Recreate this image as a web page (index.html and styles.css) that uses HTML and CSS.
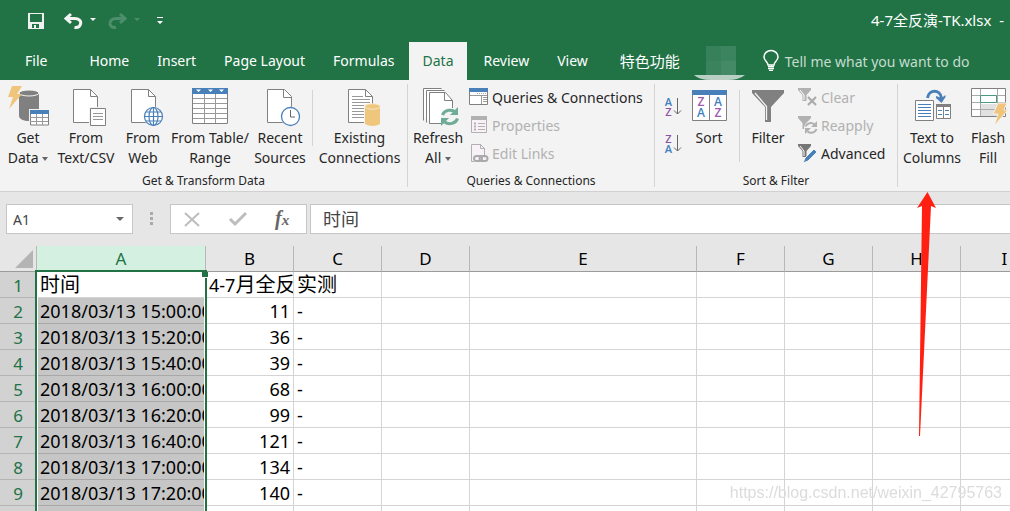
FILE: index.html
```html
<!DOCTYPE html>
<html lang="en">
<head>
    <meta charset="UTF-8">
    <meta name="viewport" content="width=device-width, initial-scale=1.0">
    <title>4-7全反演-TK.xlsx</title>
    <link rel="stylesheet" href="styles.css">
</head>
<body>
    <header class="titlebar">
        <div class="quick-access">
            <button type="button" class="quick-btn" aria-label="Save">
                <svg width="16" height="16" viewBox="0 0 16 16"><path fill="#f0f0f0" fill-rule="evenodd" d="M0 0H16V16H0ZM2 1V9H14V1ZM4 11V15H6V12H8V15H11V11Z"/></svg>
            </button>
            <button type="button" class="quick-btn undo" aria-label="Undo">
                <svg width="34" height="18" viewBox="0 0 34 18"><path d="M7 2L2 6.500L7 11M2.500 6.500H10.500C15 6.500 17.500 9 16.500 12C16 14.500 14 16 10.500 15.500" fill="none" stroke="#f4f4f4" stroke-width="3"/><path d="M26 6h6l-3 3z" fill="#f4f4f4"/></svg>
            </button>
            <button type="button" class="quick-btn redo" aria-label="Redo" disabled>
                <svg width="34" height="18" viewBox="0 0 34 18"><path d="M12 2L17 6.500L12 11M16.500 6.500H8.500C4 6.500 1.500 9 2 12C2.500 14.500 4.500 16 8 15.500" fill="none" stroke="#4d8f6c" stroke-width="3"/><path d="M26 6h6l-3 3z" fill="#4d8f6c"/></svg>
            </button>
            <button type="button" class="quick-btn" aria-label="Customize Quick Access Toolbar">
                <svg width="6" height="8" viewBox="0 0 6 8"><path d="M0 0h6v1H0zM0 4h6l-3 3z" fill="#fff"/></svg>
            </button>
        </div>
        <div class="file-name">4-7全反演-TK.xlsx&nbsp; -</div>
    </header>

    <nav class="tabs">
        <a href="#" class="tab file">File</a>
        <a href="#" class="tab">Home</a>
        <a href="#" class="tab">Insert</a>
        <a href="#" class="tab">Page Layout</a>
        <a href="#" class="tab">Formulas</a>
        <a href="#" class="tab active">Data</a>
        <a href="#" class="tab">Review</a>
        <a href="#" class="tab">View</a>
        <a href="#" class="tab extra">特色功能</a>
        <svg class="blurred" width="56" height="38" viewBox="0 0 56 38"><path d="M12 4h15v15H12z" fill="#36805a"/><path d="M27 4h15v15H27z" fill="#3c845f"/><path d="M12 19h15v14H12z" fill="#3a835d"/><path d="M27 19h15v14H27z" fill="#448a66"/><path d="M0 33h51q-6 5-17 5H17Q5 38 0 33z" fill="#b9cfc3"/></svg>
        <a href="#" class="tell-me">
            <svg width="16" height="22" viewBox="0 0 16 22"><path d="M5 15C5 12 1 11 1 7A7 6.500 0 0 1 15 7C15 11 11 12 11 15Z" fill="none" stroke="#fff" stroke-width="1.500"/><path d="M5 16.500h6M5 18.500h6M6 20.300h4" stroke="#fff" stroke-width="1.300"/></svg>
            Tell me what you want to do
        </a>
    </nav>

    <main class="ribbon">
        <section class="group group-get">
            <div class="tools">
                <button type="button" class="big w50">
                    <svg width="40" height="40" viewBox="0 0 40 40"><path d="M11 8v22c0 3 5 5 10 5s10-2 10-5V8z" fill="#808080"/><ellipse cx="21" cy="7" rx="10" ry="3" fill="#808080" stroke="#f3f3f3"/><path d="M4 0h10L9 8h5L1 23 5 11H0z" fill="#f0c57b"/><path d="M21 23h20v17H21z" fill="#f3f3f3"/><path d="M22.500 25h18v14h-18z" fill="#fff" stroke="#808080"/><path d="M22 24h19v4H22z" fill="#4a80b9"/><path d="M22 31.500h18M22 35.500h18M28.500 28v11M34.500 28v11" stroke="#999"/></svg>
                    <span>Get<br>Data <i class="caret"></i></span>
                </button>
                <button type="button" class="big w66">
                    <svg width="40" height="40" viewBox="0 0 40 40"><path d="M7.500 3.500h17l7 7v26h-24z" fill="#fff" stroke="#808080"/><path d="M24.500 3.500v7h7" fill="none" stroke="#808080"/><path d="M23 21h18v19H23z" fill="#f3f3f3"/><path d="M24.500 22.500h15v17h-15z" fill="#fff" stroke="#808080"/><path d="M27 27.500h10M27 30.500h10M27 33.500h10" stroke="#999"/></svg>
                    <span>From<br>Text/CSV</span>
                </button>
                <button type="button" class="big w48">
                    <svg width="40" height="40" viewBox="0 0 40 40"><path d="M8.500 3.500h17l7 7v26h-24z" fill="#fff" stroke="#808080"/><path d="M25.500 3.500v7h7" fill="none" stroke="#808080"/><circle cx="30.500" cy="30.500" r="10" fill="#f3f3f3"/><g fill="none" stroke="#4a80b9" stroke-width="1.200"><circle cx="30.500" cy="30.500" r="9" fill="#fff"/><ellipse cx="30.500" cy="30.500" rx="4.500" ry="9"/><path d="M30.500 21.500v18M21.500 30.500h18M23 26h15M23 35h15"/></g></svg>
                    <span>From<br>Web</span>
                </button>
                <button type="button" class="big w86">
                    <svg width="40" height="40" viewBox="0 0 40 40"><path d="M2.500 2.500h35v35h-35z" fill="#fff" stroke="#808080"/><path d="M3 12.500h34M3 17.500h34M3 22.500h34M3 27.500h34M3 32.500h34M14.500 8v29M25.500 8v29" stroke="#999"/><path d="M2 2h36v6H2z" fill="#4a80b9"/><path d="M6 3.500h5L8.500 6zM18 3.500h5L20.500 6zM29 3.500h5L31.500 6z" fill="#fff"/></svg>
                    <span>From Table/<br>Range</span>
                </button>
                <button type="button" class="big w54">
                    <svg width="40" height="40" viewBox="0 0 40 40"><path d="M7.500 3.500h17l7 7v26h-24z" fill="#fff" stroke="#808080"/><path d="M23.500 3.500v8h8" fill="none" stroke="#808080"/><circle cx="30.500" cy="30.500" r="10" fill="#f3f3f3"/><circle cx="30.500" cy="30.500" r="9" fill="#fff" stroke="#4a80b9" stroke-width="1.300"/><path d="M30.500 24v7H35" fill="none" stroke="#666"/></svg>
                    <span>Recent<br>Sources</span>
                </button>
                <div class="divider"></div>
                <button type="button" class="big w85">
                    <svg width="40" height="40" viewBox="0 0 40 40"><path d="M8.500 3.500h17l7 7v26h-24z" fill="#fff" stroke="#808080"/><path d="M25.500 3.500v7h7" fill="none" stroke="#808080"/><path d="M12 10.500h11M12 13.500h18M12 16.500h18M12 19.500h18M12 22.500h18M12 25.500h18M12 28.500h18M12 31.500h18" stroke="#999"/><path d="M24 18h17v22H24z" fill="#f3f3f3"/><path d="M25 21v17q7.500 4 15 0V21z" fill="#eec67c"/><ellipse cx="32.500" cy="20.500" rx="7.500" ry="2.700" fill="#eec67c" stroke="#f8e9cb"/></svg>
                    <span>Existing<br>Connections</span>
                </button>
            </div>
            <h2>Get &amp; Transform Data</h2>
        </section>

        <section class="group group-queries">
            <div class="tools">
                <button type="button" class="big w54">
                    <svg width="40" height="40" viewBox="0 0 40 40"><g fill="#fff" stroke="#808080"><path d="M5.500 34.500v-32h18M8.500 36.500v-32h18"/><path d="M11.500 6.500h16l7 8v23h-23z"/><path d="M26.500 6.500v8h8" fill="none"/></g><circle cx="32" cy="31" r="9.500" fill="#f3f3f3"/><path d="M24.500 29a8 7 0 0 1 13-3M39.500 32.500a8 7 0 0 1-13 3.500" fill="none" stroke="#6eac95" stroke-width="3"/><path d="M40 21v8h-8zM23 40v-8h8z" fill="#6eac95"/></svg>
                    <span>Refresh<br>All <i class="caret"></i></span>
                </button>
                <div class="list">
                    <button type="button" class="small">
                        <svg width="20" height="20" viewBox="0 0 20 20"><path d="M.5 1.500h18v16H.5z" fill="#fff" stroke="#808080"/><path d="M0 1h19v4H0z" fill="#4a80b9"/><path d="M1 8.500h17M12.500 9v8" stroke="#999"/><path d="M8 6.500h10" stroke="#aaa" stroke-dasharray="1 1"/><path d="M14 10.500h4M14 12.500h4M14 14.500h4" stroke="#999"/></svg>
                        Queries &amp; Connections
                    </button>
                    <button type="button" class="small" disabled>
                        <svg width="20" height="20" viewBox="0 0 20 20"><path d="M2.500 1.500h15v16h-15z" fill="#f8f2f8" stroke="#b1b1b1"/><path d="M2 1h16v4H2z" fill="#b1b1b1"/><path d="M9 8.500h7M9 11.500h7M9 14.500h7" stroke="#b1b1b1"/><path d="M5 7.500h2v2H5zM5 10.500h2v2H5zM5 13.500h2v2H5z" fill="#b1b1b1"/></svg>
                        Properties
                    </button>
                    <button type="button" class="small" disabled>
                        <svg width="20" height="20" viewBox="0 0 20 20"><path d="M2.500 18.500v-17h9l4 4v9" fill="#f8f2f8" stroke="#b1b1b1"/><path d="M11.500 1v4.500H16M2.500 18.500H5" fill="none" stroke="#b1b1b1"/><g fill="none" stroke="#aaa" stroke-width="2"><rect x="5" y="13" width="8" height="5" rx="2.500"/><rect x="10.500" y="13" width="8" height="5" rx="2.500"/></g></svg>
                        Edit Links
                    </button>
                </div>
            </div>
            <h2>Queries &amp; Connections</h2>
        </section>

        <section class="group group-sort">
            <div class="tools">
                <div class="sort-pair">
                    <button type="button" aria-label="Sort A to Z">
                        <svg width="20" height="22" viewBox="0 0 20 22"><g class="letters"><text x="4.500" y="10" fill="#3f7fbf">A</text><text x="4.500" y="20" fill="#8e52a5">Z</text></g><path d="M13.500 2v16M10 14.500l3.500 3.500 3.500-3.500" fill="none" stroke="#666"/></svg>
                    </button>
                    <button type="button" aria-label="Sort Z to A">
                        <svg width="20" height="22" viewBox="0 0 20 22"><g class="letters"><text x="4.500" y="10" fill="#8e52a5">Z</text><text x="4.500" y="20" fill="#3f7fbf">A</text></g><path d="M13.500 2v16M10 14.500l3.500 3.500 3.500-3.500" fill="none" stroke="#666"/></svg>
                    </button>
                </div>
                <button type="button" class="big w50">
                    <svg width="40" height="40" viewBox="0 0 40 40"><path d="M3.500 4.500h34v30h-34z" fill="#fff" stroke="#808080"/><path d="M20.500 9v25" stroke="#808080"/><path d="M3 4h35v5H3z" fill="#4a80b9"/><g class="letters big-letters"><text x="12" y="20" fill="#9b59b0">Z</text><text x="12" y="31" fill="#3f7fbf">A</text><text x="29" y="20" fill="#3f7fbf">A</text><text x="29" y="31" fill="#9b59b0">Z</text></g></svg>
                    <span>Sort</span>
                </button>
                <div class="divider long"></div>
                <button type="button" class="big w48">
                    <svg width="40" height="40" viewBox="0 0 40 40"><path d="M4 4h32v3L23 21v15h-6V21L4 7z" fill="#808080"/><path d="M7 7l11.500 13.500V34" fill="none" stroke="#f3f3f3" stroke-width="1.300"/></svg>
                    <span>Filter</span>
                </button>
                <div class="list filter-list">
                    <button type="button" class="small" disabled>
                        <svg width="20" height="20" viewBox="0 0 20 20"><path d="M0 1h13v2L8.500 8v6h-4V8L0 3z" fill="#b1b1b1"/><path d="M2 3l4 5v5" fill="none" stroke="#fff"/><path d="M10 10l8 8M18 10l-8 8" stroke="#aaa" stroke-width="2.200"/></svg>
                        Clear
                    </button>
                    <button type="button" class="small" disabled>
                        <svg width="20" height="20" viewBox="0 0 20 20"><path d="M0 1h13v2L8.500 8v6h-4V8L0 3z" fill="#b1b1b1"/><circle cx="13" cy="13" r="7" fill="#f3f3f3"/><path d="M7.500 11.500a5.500 5 0 0 1 9-2M18.500 14a5.500 5 0 0 1-9 2.500" fill="none" stroke="#b1b1b1" stroke-width="2"/><path d="M19 6v6h-6zM7 19v-6h6z" fill="#b1b1b1"/></svg>
                        Reapply
                    </button>
                    <button type="button" class="small">
                        <svg width="20" height="20" viewBox="0 0 20 20"><path d="M0 1h13v2L8.500 8v6h-4V8L0 3z" fill="#777"/><path d="M2 3l4 5v5" fill="none" stroke="#fff"/><path d="M16 6l3 3-9 9-5 2 2-5z" fill="#4a80b9" stroke="#f3f3f3"/></svg>
                        Advanced
                    </button>
                </div>
            </div>
            <h2>Sort &amp; Filter</h2>
        </section>

        <section class="group group-tools">
            <div class="tools">
                <button type="button" class="big w62">
                    <svg width="40" height="40" viewBox="0 0 40 40"><path d="M3.500 14.500h18v20h-18z" fill="#fff" stroke="#808080"/><path d="M6 18.500h13M6 21.500h13M6 24.500h13M6 27.500h13M6 30.500h13" stroke="#4a80b9"/><path d="M24.500 18.500h14v14h-14z" fill="#fff" stroke="#808080"/><path d="M24 18h15v3H24zM31 19h1v14h-1z" fill="#808080"/><path d="M26 24.500h4M26 28.500h4M33 24.500h4M33 28.500h4" stroke="#4a80b9"/><path d="M15.500 12C17 3 28 3 29.500 12" fill="none" stroke="#4a80b9" stroke-width="3"/><path d="M24 10l5.500 2 4-3v2l-4 6-5.500-5z" fill="#4a80b9"/></svg>
                    <span>Text to<br>Columns</span>
                </button>
                <button type="button" class="big w50">
                    <svg width="40" height="40" viewBox="0 0 40 40"><path d="M3.500 2.500h34v28h-34z" fill="#fff" stroke="#808080"/><path d="M12 18h18v12H12z" fill="#e1e1e1"/><path d="M4 9.500h33M4 16.500h33M4 23.500h33M12.500 3v27M29.500 3v27" stroke="#aaa"/><path d="M12.500 9.500h16v7h-16z" fill="#fff" stroke="#4d997c"/><path d="M30 17h9l-3 7h4L26 40l4-12h-5z" fill="#f0c57b" stroke="#f3f3f3"/></svg>
                    <span>Flash<br>Fill</span>
                </button>
            </div>
        </section>
    </main>

    <div class="formula-bar">
        <div class="name-box">
            <input type="text" value="A1" aria-label="Name Box">
            <i class="caret"></i>
        </div>
        <svg class="grip" width="4" height="14" viewBox="0 0 4 14"><path d="M0 0h3v3H0zM0 5h3v3H0zM0 10h3v3H0z" fill="#aaa"/></svg>
        <div class="formula-actions">
            <button type="button" aria-label="Cancel"><svg width="18" height="16" viewBox="0 0 18 16"><path d="M2 2l14 13M16 2L2 15" stroke="#bdbdbd" stroke-width="2"/></svg></button>
            <button type="button" aria-label="Enter"><svg width="18" height="16" viewBox="0 0 18 16"><path d="M1 8l5 5L17 2" fill="none" stroke="#bdbdbd" stroke-width="3"/></svg></button>
            <button type="button" class="fx" aria-label="Insert Function">f<small>x</small></button>
        </div>
        <input type="text" class="formula-input" value="时间" aria-label="Formula">
    </div>

    <div class="sheet">
        <table>
            <colgroup>
                <col class="c-head"><col class="c-a"><col><col><col><col class="c-e"><col><col><col><col>
            </colgroup>
            <thead>
                <tr>
                    <th><svg class="corner" width="18" height="18" viewBox="0 0 18 18"><path d="M18 0v18H0z" fill="#b4b4b4"/></svg></th>
                    <th class="selected">A</th><th>B</th><th>C</th><th>D</th><th>E</th><th>F</th><th>G</th><th>H</th><th>I</th>
                </tr>
            </thead>
            <tbody id="rows"></tbody>
        </table>
        <div class="selection"></div>
    </div>

    <svg class="arrow" width="20" height="246" viewBox="0 0 20 246"><path d="M10.500 0L0 16l5-2L2 244h1L14 14l5 2z" fill="#ff2012"/></svg>
    <div class="watermark">https://blog.csdn.net/weixin_42795763</div>

    <script>
        var data = [
            ["时间", "4-7月全反演", "实测"],
            ["2018/03/13 15:00:00", 11, "-"],
            ["2018/03/13 15:20:00", 36, "-"],
            ["2018/03/13 15:40:00", 39, "-"],
            ["2018/03/13 16:00:00", 68, "-"],
            ["2018/03/13 16:20:00", 99, "-"],
            ["2018/03/13 16:40:00", 121, "-"],
            ["2018/03/13 17:00:00", 134, "-"],
            ["2018/03/13 17:20:00", 140, "-"],
            ["", "", ""]
        ];

        // Build the sheet rows, columns D to I are empty
        var html = "";
        data.forEach(function (row, i) {
            html += "<tr><th>" + (i + 1) + "</th>";
            for (var c = 0; c < 9; c++) {
                var value = row[c] === undefined ? "" : row[c];
                if (typeof value === "number") {
                    html += '<td class="number">' + value + "</td>";
                } else {
                    // Chinese text is set a little larger than the digits
                    html += "<td>" + value.replace(/[\u4e00-\u9fff]+/g, '<span class="cjk">$&</span>') + "</td>";
                }
            }
            html += "</tr>";
        });
        document.getElementById("rows").innerHTML = html;
    </script>
</body>
</html>
```
FILE: styles.css
```css
* {
    box-sizing: border-box;
}

body {
    position: relative;
    margin: 0;
    height: 100vh;
    overflow: hidden;
    background-color: #fff;
    font-family: "Noto Sans", "Noto Sans CJK SC", sans-serif;
    font-size: 14px;
    color: #262626;
}

button {
    padding: 0;
    border: none;
    background: none;
    font: inherit;
    color: inherit;
    cursor: pointer;
}

button:disabled {
    color: #b1b1b1;
    cursor: default;
}

input {
    border: none;
    outline: none;
    background: none;
    font: inherit;
    color: #444;
}

svg {
    display: block;
    flex: none;
    overflow: visible;
}

.caret {
    display: inline-block;
    border: 3px solid transparent;
    border-top: 4px solid #666;
    border-bottom: 0;
    vertical-align: middle;
}

/* Title bar and tabs */
.titlebar {
    display: flex;
    align-items: center;
    justify-content: space-between;
    height: 42px;
    padding: 0 6px 2px 28px;
    background-color: #217346;
    color: #fff;
}

.quick-access {
    display: flex;
    align-items: center;
    padding-top: 2px;
}

.undo {
    margin-left: 20px;
}

.redo {
    margin: 0 15px 0 10px;
}

.file-name {
    font-size: 15px;
    line-height: 18px;
}

.tabs {
    display: flex;
    height: 38px;
    background-color: #217346;
}

.tab {
    padding: 0 14px;
    line-height: 38px;
    color: #fff;
    text-decoration: none;
    white-space: nowrap;
}

.tab.file {
    padding: 0 28px 0 25px;
}

.tab.active {
    background-color: #f3f3f3;
    color: #217346;
}

.tab.active + .tab {
    padding-left: 16px;
}

.tab.extra {
    padding-left: 18px;
    font-size: 15px;
}

.tell-me {
    display: flex;
    align-items: center;
    gap: 6px;
    margin-left: 13px;
    color: #c5dccf;
    text-decoration: none;
    white-space: nowrap;
}

/* Ribbon */
.ribbon {
    display: flex;
    height: 112px;
    padding: 4px 0;
    background-color: #f3f3f3;
    border-bottom: 1px solid #d0d0d0;
    overflow: hidden;
}

.group {
    display: flex;
    flex: none;
    flex-direction: column;
    padding: 0 3px;
    border-right: 1px solid #d4d4d4;
}

.group-get {
    width: 408px;
}

.group-queries {
    width: 247px;
}

.group-sort {
    width: 243px;
}

.group-tools {
    border-right: none;
}

.group h2 {
    margin: 0;
    font-size: 12px;
    line-height: 12px;
    font-weight: normal;
    text-align: center;
}

.tools {
    display: flex;
    flex: none;
    align-items: flex-start;
    height: 91px;
}

.big {
    display: flex;
    flex: none;
    flex-direction: column;
    align-items: center;
    padding-top: 2px;
    line-height: 20px;
    white-space: nowrap;
}

.big span {
    padding-top: 2px;
}

.w48 { width: 48px; }
.w50 { width: 50px; }
.w54 { width: 54px; }
.w62 { width: 62px; }
.w66 { width: 66px; }
.w85 { width: 85px; }
.w86 { width: 86px; }

.divider {
    width: 1px;
    height: 56px;
    margin: 6px 4px 0 5px;
    background-color: #d4d4d4;
}

.divider.long {
    height: 72px;
}

.list {
    display: flex;
    flex-direction: column;
    padding-left: 4px;
}

.small {
    display: flex;
    align-items: center;
    gap: 3px;
    height: 28px;
    padding-bottom: 2px;
    white-space: nowrap;
}

.filter-list {
    padding-left: 6px;
}

.sort-pair {
    display: flex;
    flex-direction: column;
    gap: 15px;
    padding: 12px 0 0 6px;
}

.letters {
    font-family: "Open Sans", sans-serif;
    font-size: 11px;
    font-weight: 600;
    text-anchor: middle;
}

.big-letters {
    font-size: 12px;
}

/* Formula bar */
.formula-bar {
    display: flex;
    align-items: center;
    height: 54px;
    padding-left: 6px;
    background-color: #e6e6e6;
}

.name-box,
.formula-actions,
.formula-input {
    height: 30px;
    border: 1px solid #c6c6c6;
    background-color: #fff;
}

.name-box {
    display: flex;
    align-items: center;
    width: 127px;
    padding: 0 8px 0 6px;
}

.name-box input {
    flex: 1;
    width: 0;
    padding: 0;
}

.name-box .caret {
    border-width: 4px;
    border-bottom-width: 0;
}

.grip {
    margin: 0 16px 0 17px;
}

.formula-actions {
    display: flex;
    align-items: center;
    gap: 28px;
    width: 137px;
    margin-right: 3px;
    padding-left: 12px;
}

.fx {
    font-family: "Liberation Serif", serif;
    font-size: 20px;
    font-style: italic;
    font-weight: bold;
    line-height: 20px;
    color: #666;
}

.fx small {
    font-size: 15px;
}

.formula-input {
    flex: 1;
    min-width: 0;
    padding: 0 12px 2px;
    border-right: none;
    font-size: 18px;
}

/* Sheet */
.sheet {
    position: relative;
    overflow: hidden;
}

table {
    width: 1049px;
    table-layout: fixed;
    border-collapse: separate;
    border-spacing: 0;
    color: #000;
}

col {
    width: 88px;
}

.c-head {
    width: 37px;
}

.c-a {
    width: 169px;
}

.c-e {
    width: 227px;
}

th,
td {
    height: 26px;
    padding: 0;
    font-size: 18px;
    line-height: 25px;
    font-weight: normal;
    white-space: nowrap;
    overflow: hidden;
    border-right: 1px solid #d4d4d4;
    border-bottom: 1px solid #d4d4d4;
}

thead th {
    background-color: #e6e6e6;
    border-right-color: #b8b8b8;
    border-bottom-color: #9b9b9b;
    font-size: 17px;
}

thead .selected {
    background-color: #d3f0e0;
    color: #217346;
}

tbody th {
    background-color: #d2d2d2;
    border-color: #b4b4b4;
    font-size: 17px;
    color: #217346;
}

tbody th,
td {
    padding-top: 2px;
    line-height: 23px;
}

td {
    padding-left: 3px;
}

.number {
    padding-left: 0;
    padding-right: 3px;
    text-align: right;
}

.cjk {
    font-size: 20px;
    line-height: 20px;
}

tbody tr:not(:first-child) td:nth-child(2) {
    background-color: #c6c6c6;
    border-bottom-color: #a8a8a8;
}

.corner {
    margin-left: 15px;
}

.selection {
    position: absolute;
    top: 24px;
    left: 35px;
    width: 172px;
    height: 300px;
    border: 2px solid #217346;
    box-shadow: inset 0 0 0 1px #fff;
}

.selection::after {
    content: "";
    position: absolute;
    top: 0;
    right: -3px;
    width: 6px;
    height: 5px;
    background-color: #217346;
    border-bottom: 1px solid #fff;
    border-left: 1px solid #fff;
}

/* Pointer drawn over the sheet */
.arrow {
    position: absolute;
    top: 192px;
    left: 917px;
    pointer-events: none;
}

.watermark {
    position: fixed;
    right: 8px;
    bottom: 9px;
    font-family: "Liberation Sans", sans-serif;
    font-size: 16px;
    line-height: 18px;
    color: #dcdcdc;
}
```
